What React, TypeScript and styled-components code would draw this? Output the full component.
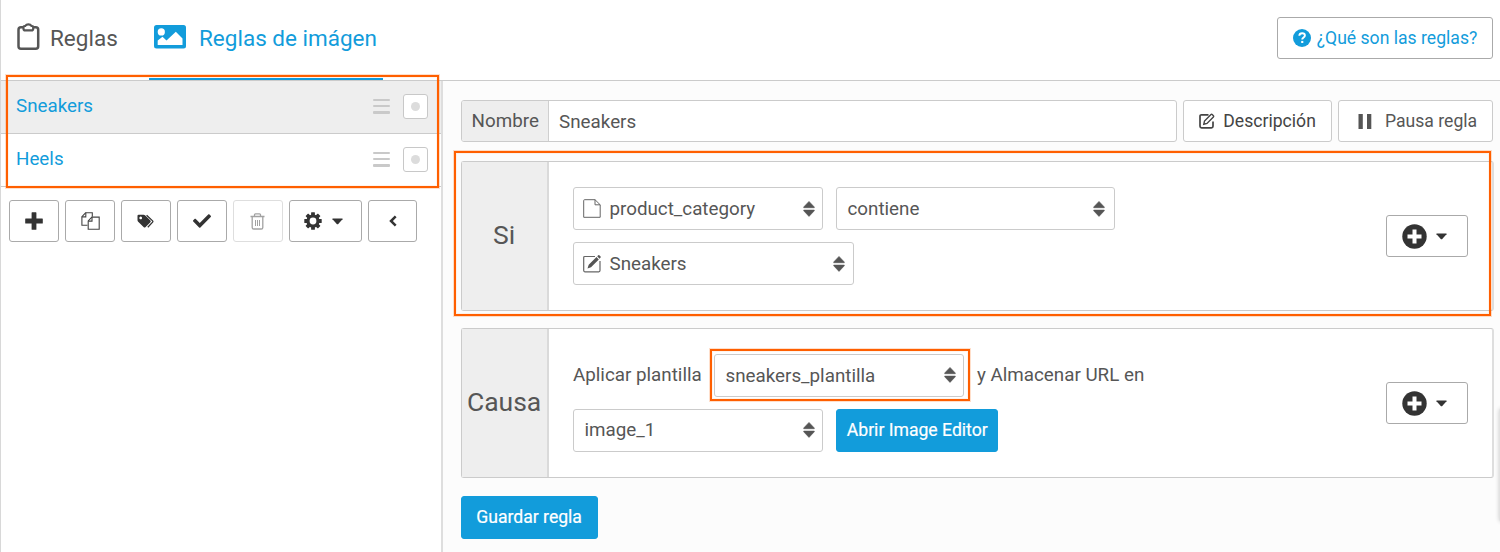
import React from "react";
import styled, { createGlobalStyle } from "styled-components";
import { FaCheck } from "react-icons/fa";

const GlobalStyle = createGlobalStyle`
  * { box-sizing: border-box; }
  html, body { margin: 0; padding: 0; background: #fff; overflow: hidden; }
  body { font-family: Roboto, "Liberation Sans", sans-serif; font-size: 18.8px; color: #565656; }
  svg { display: block; flex: none; }
`;

const blue = "#129cdb";

const Page = styled.div`
  position: relative;
  width: 1500px;
  height: 552px;
  display: flex;
  flex-direction: column;
  border-left: 1px solid #d8d8d8;
  overflow: hidden;
`;

const Header = styled.header`
  height: 81px;
  flex: none;
  display: flex;
  align-items: flex-start;
  border-bottom: 1px solid #cbcbcb;
  padding-right: 7px;
`;

const Tab = styled.div<{ $active?: boolean; $width: number; $left: number; $gap: number }>`
  width: ${(p) => p.$width}px;
  height: 80px;
  padding: 0 0 ${(p) => (p.$active ? 2 : 4)}px ${(p) => p.$left}px;
  display: flex;
  align-items: center;
  gap: ${(p) => p.$gap}px;
  font-size: 22.5px;
  line-height: 76px;
  white-space: nowrap;
  color: ${(p) => (p.$active ? blue : "#565656")};
  border-bottom: ${(p) => (p.$active ? `2px solid ${blue}` : "0")};
  svg { margin-top: -3px; }
`;

const Button = styled.button<{ $w: number; $h?: number; $tone?: string; $color?: string; $gap?: number; $fade?: boolean; $shift?: number; $pull?: number }>`
  width: ${(p) => p.$w}px;
  height: ${(p) => p.$h ?? 42}px;
  flex: none;
  display: flex;
  align-items: center;
  justify-content: center;
  gap: ${(p) => p.$gap ?? 8}px;
  padding: 0 ${(p) => p.$pull ?? 0}px 0 ${(p) => p.$shift ?? 0}px;
  border: 1px solid ${(p) => p.$tone ?? "#aaa"};
  border-radius: 3px;
  background: #fff;
  color: ${(p) => p.$color ?? "#333"};
  font: 400 17.6px/40px Roboto, "Liberation Sans", sans-serif;
  white-space: nowrap;
  > svg { opacity: ${(p) => (p.$fade ? 0.45 : 1)}; }
`;

const HelpButton = styled(Button)`
  margin: 17px 0 0 auto;
  line-height: 41px;
`;

const PrimaryButton = styled(Button)`
  background: ${blue};
  border-color: ${blue};
  color: #fff;
  font-size: 17.6px;
  -webkit-text-stroke: 0.2px #fff;
  padding-bottom: 2px;
`;

const Body = styled.div`
  flex: 1;
  display: flex;
  min-height: 0;
`;

const Sidebar = styled.aside`
  width: 442px;
  flex: none;
  border-right: 2px solid #dedede;
`;

const RuleList = styled.div`
  position: relative;
`;

const RuleRow = styled.div<{ $selected?: boolean }>`
  height: 53px;
  display: flex;
  align-items: center;
  padding: 0 13px 2px 15px;
  border-bottom: 1px solid #cbcbcb;
  background: ${(p) => (p.$selected ? "#eee" : "#fff")};
  color: ${blue};
`;

const RuleName = styled.span`
  flex: 1;
  line-height: 22px;
`;

const Grip = styled.span`
  width: 17px;
  height: 15px;
  margin-right: 13px;
  display: flex;
  flex-direction: column;
  justify-content: space-between;
  &::before, &::after, i {
    content: "";
    height: 2.5px;
    border-radius: 1px;
    background: #c9c9c9;
  }
`;

const Status = styled.span`
  width: 25px;
  height: 25px;
  border: 1px solid #c8c8c8;
  border-radius: 3px;
  background: #fff;
  display: flex;
  align-items: center;
  justify-content: center;
  &::before {
    content: "";
    width: 9px;
    height: 9px;
    border-radius: 50%;
    background: #dcdcdc;
  }
`;

const Toolbar = styled.div`
  display: flex;
  gap: 6px;
  padding: 13px 0 0 8.4px;
`;

const Highlight = styled.div<{ $inset: string }>`
  position: absolute;
  inset: ${(p) => p.$inset};
  border: 2px solid #ff5f00;
  box-shadow: 0 0 0 1px rgba(255, 110, 20, 0.22), inset 0 0 0 1px rgba(255, 110, 20, 0.08);
  pointer-events: none;
  z-index: 2;
`;

const Editor = styled.main`
  flex: 1;
  min-width: 0;
  background: #fcfcfc;
  padding: 19px 6px 0 17.6px;
`;

const NameRow = styled.div`
  display: flex;
  align-items: center;
  gap: 6px;
`;

const NameGroup = styled.div`
  width: 716px;
  height: 42px;
  display: flex;
  border: 1px solid #cbcbcb;
  border-radius: 3px;
  background: #fff;
  overflow: hidden;
`;

const NameLabel = styled.label`
  width: 87px;
  padding-left: 10px;
  line-height: 40px;
  background: #eee;
  border-right: 1px solid #cfcfcf;
`;

const NameValue = styled.div`
  padding-left: 10.5px;
  line-height: 42px;
`;

const Panel = styled.section<{ $top: number }>`
  position: relative;
  width: 1033px;
  height: 150px;
  margin-top: ${(p) => p.$top}px;
  display: flex;
  border: 1px solid #cbcbcb;
  border-right: 2px solid #dedede;
  border-radius: 3px;
  background: #fff;
`;

const PanelTitle = styled.h2`
  margin: 0;
  width: 87px;
  flex: none;
  display: flex;
  align-items: center;
  justify-content: center;
  padding-bottom: 3px;
  font-size: 26.5px;
  font-weight: 400;
  background: #eee;
  border-right: 2px solid #dadada;
`;

const PanelBody = styled.div`
  flex: 1;
  display: flex;
  align-items: center;
  padding: 0 24px 0 24.4px;
`;

const Lines = styled.div`
  flex: 1;
  display: flex;
  flex-direction: column;
  gap: 12.5px;
`;

const Line = styled.div`
  display: flex;
  gap: 12.5px;
`;

const Select = styled.div<{ $w: number; $right?: number }>`
  position: relative;
  width: ${(p) => p.$w}px;
  height: 42.5px;
  display: flex;
  align-items: center;
  padding: 0 ${(p) => p.$right ?? 7}px 0 10.5px;
  border: 1px solid #cbcbcb;
  border-radius: 3px;
  background: #fff;
  line-height: 40px;
  white-space: nowrap;
`;

const SelectText = styled.span<{ $drop?: number }>`
  flex: 1;
  padding-top: ${(p) => p.$drop ?? 0}px;
`;

const SelectIcon = styled.span`
  margin: 0 8px 0 -1px;
`;

const Inline = styled.span<{ $w?: number }>`
  width: ${(p) => (p.$w ? `${p.$w}px` : "auto")};
  line-height: 42px;
  white-space: nowrap;
`;

const SaveRow = styled.div`
  padding-top: 18px;
`;

const EdgeHandle = styled.div`
  position: absolute;
  left: 1498px;
  top: 408px;
  width: 10px;
  height: 114px;
  border-radius: 4px;
  background: #e2e2e2;
  box-shadow: 0 0 4px rgba(0, 0, 0, 0.2);
`;

const Sorter = () => (
  <svg width="12" height="16" viewBox="0 0 12 16" fill="#555">
    <path d="M6 .4 11.3 6v.7H.7V6zM6 15.4 11.3 9.8v-.7H.7v.7z" stroke="#555" strokeWidth=".6" strokeLinejoin="round" />
  </svg>
);

const Caret = () => (
  <svg width="11" height="7" viewBox="0 0 11 7" fill="currentColor">
    <path d="M.5.5h10v.8L6 6.2H5L.5 1.300z" />
  </svg>
);

const ClipboardIcon = () => (
  <svg width="23" height="28" viewBox="0 0 23 28" fill="none" stroke="#565656" strokeWidth="2.500">
    <rect x="1.500" y="4.200" width="19.700" height="21.600" rx="2.500" />
    <path d="M6.500 4.200v1.500q0 1.700 1.700 1.700h6.300q1.700 0 1.700-1.700V4.200q0-1.200-1.200-1.200h-.5Q13.500 1.300 11.400 1.300T8.200 3h-.5q-1.200 0-1.200 1.200z" fill="#fff" strokeWidth="2.200" />
  </svg>
);

const PictureIcon = () => (
  <svg width="32" height="24" viewBox="0 0 32 24">
    <rect width="32" height="23.500" rx="2.500" fill={blue} />
    <circle cx="7.300" cy="6.900" r="3.600" fill="#fff" />
    <path d="M3.700 20v-4.500l4.800-3.800 4 3.800 9.300-8.700 6.700 6.700V20z" fill="#fff" />
  </svg>
);

const HelpIcon = () => (
  <svg width="18" height="18" viewBox="0 0 18 18">
    <circle cx="9" cy="9" r="9" fill={blue} />
    <path d="M6.300 6.800C6.400 5 7.500 4.200 9.100 4.200c1.700 0 2.800.9 2.800 2.300 0 2-2.700 1.900-2.700 4" fill="none" stroke="#fff" strokeWidth="1.900" />
    <rect x="8.200" y="11.900" width="2.100" height="2.100" fill="#fff" />
  </svg>
);

const PlusIcon = () => (
  <svg width="18" height="18" viewBox="0 0 18 18" fill="#333">
    <path d="M6.600.7q0-.5.5-.5h3.800q.5 0 .5.500v5.900h5.900q.5 0 .5.500v3.800q0 .5-.5.500h-5.900v5.900q0 .5-.5.500H7.100q-.5 0-.5-.5v-5.900H.7q-.5 0-.5-.5V7.100q0-.5.500-.5h5.900z" />
  </svg>
);

const CopyIcon = () => (
  <svg width="19" height="18" viewBox="0 0 19 18" fill="none" stroke="#444" strokeWidth="1.100">
    <path d="M6.500 13.300H.9V4.700L4.600.8h6.700v4" />
    <path d="M4.800.8v4.100H.9" />
    <path d="M7.200 17.200V8.900l3.700-3.800h7.300v12.100z" fill="#fff" />
    <path d="M11 5.100v4H7.200" />
  </svg>
);

const TagsIcon = () => (
  <svg width="18" height="15" viewBox="0 0 18 15">
    <path fillRule="evenodd" fill="#333" d="M.5 1.800Q.5.700 1.600.7h5q.8 0 1.400.6l5.400 5.300q.8.8 0 1.600l-5 5q-.8.8-1.600 0L1.200 7.700Q.5 7 .5 6.200zM3.700 2.600a1.350 1.350 0 1 0 .01 0z" />
    <path d="M9.600 1.200 15.600 6.900q.6.600 0 1.200L10.800 13.300" fill="none" stroke="#333" strokeWidth="1.300" />
  </svg>
);

const TrashIcon = () => (
  <svg width="15" height="17" viewBox="0 0 15 17" fill="none" stroke="#333" strokeWidth="1.300">
    <path d="M.5 3.500h14M4.500 3.200V1.800Q4.500.8 5.500.8h4q1 0 1 1v1.400M2.200 3.800v10.600q0 1.600 1.600 1.600h7.400q1.600 0 1.600-1.600V3.800" />
    <path d="M5.500 7v6M7.500 7v6M9.500 7v6" strokeWidth="1" />
  </svg>
);

const GearIcon = () => (
  <svg width="18" height="18" viewBox="-9 -9 18 18">
    {[0, 45, 90, 135].map((a) => (
      <rect key={a} x="-1.900" y="-8.700" width="3.800" height="17.400" rx=".5" fill="#333" transform={`rotate(${a})`} />
    ))}
    <circle r="6.600" fill="#333" />
    <circle r="3.400" fill="#fff" />
  </svg>
);

const ChevronIcon = () => (
  <svg width="8" height="12" viewBox="0 0 8 12" fill="none" stroke="#333" strokeWidth="2.500">
    <path d="M6.700 1.300 2 6l4.700 4.700" />
  </svg>
);

const EditIcon = () => (
  <svg width="16" height="16" viewBox="0 0 16 16" fill="none" stroke="#444" strokeWidth="1.700">
    <path d="M9.500 1.800H2.600Q1 1.800 1 3.400v9.800q0 1.600 1.600 1.600h9.800q1.600 0 1.600-1.600V8.500" />
    <path d="M4.800 11.200l.7-3.200L12 1.500q.6-.6 1.200 0l1.200 1.200q.6.6 0 1.200L8 10.400z" strokeWidth="1.400" />
  </svg>
);

const PauseIcon = () => (
  <svg width="14" height="15" viewBox="0 0 14 15" fill="#555">
    <rect x=".5" width="4.300" height="15" />
    <rect x="9" width="4.300" height="15" />
  </svg>
);

const FileIcon = () => (
  <svg width="18" height="19" viewBox="0 0 18 19" fill="none" stroke="#666" strokeWidth="1">
    <path d="M.7 1.500Q.7.700 1.500.7H12l5.200 5.100v12.500H.7z" />
    <path d="M12 .7v5.100h5.200" />
  </svg>
);

const WriteIcon = () => (
  <svg width="18" height="18" viewBox="0 0 18 18">
    <path d="M12 1.500H1.800Q.7 1.500.7 2.600v13q0 1.200 1.100 1.200h14q1.200 0 1.200-1.200V6" fill="none" stroke="#666" strokeWidth="1.200" />
    <path d="M4.500 13.500l1.200-3.700 7.800-7.800 2.300 2.400-7.800 7.800zM14.200 1.300 15.300.2q.5-.3 1 .1l1.300 1.300q.4.500 0 1L16.500 3.700z" fill="#555" />
  </svg>
);

const AddIcon = () => (
  <svg width="25" height="25" viewBox="0 0 25 25">
    <circle cx="12.500" cy="12.500" r="12.200" fill="#333" />
    <path d="M10.500 5.500h4v5h5v4h-5v5h-4v-5h-5v-4h5z" fill="#fff" />
  </svg>
);

const rules = ["Sneakers", "Heels"];

export default function App() {
  return (
    <Page>
      <GlobalStyle />
      <Header>
        <Tab $width={147.5} $left={16} $gap={10}>
          <ClipboardIcon />
          Reglas
        </Tab>
        <Tab $active $width={234} $left={5.5} $gap={13}>
          <PictureIcon />
          Reglas de imágen
        </Tab>
        <HelpButton $w={216} $color={blue} $gap={6}>
          <HelpIcon />
          ¿Qué son las reglas?
        </HelpButton>
      </Header>
      <Body>
        <Sidebar>
          <RuleList>
            {rules.map((name, i) => (
              <RuleRow key={name} $selected={i === 0}>
                <RuleName>{name}</RuleName>
                <Grip><i /></Grip>
                <Status />
              </RuleRow>
            ))}
            <Highlight $inset="-6px 2px -1px 5px" />
          </RuleList>
          <Toolbar>
            <Button $w={50}><PlusIcon /></Button>
            <Button $w={50}><CopyIcon /></Button>
            <Button $w={50}><TagsIcon /></Button>
            <Button $w={49.5}><FaCheck size={18} /></Button>
            <Button $w={50} $tone="#dedede" $fade><TrashIcon /></Button>
            <Button $w={73} $gap={10} $pull={3}><GearIcon /><Caret /></Button>
            <Button $w={49.5}><ChevronIcon /></Button>
          </Toolbar>
        </Sidebar>
        <Editor>
          <NameRow>
            <NameGroup>
              <NameLabel>Nombre</NameLabel>
              <NameValue>Sneakers</NameValue>
            </NameGroup>
            <Button $w={149} $tone="#cbcbcb" $color="#444" $shift={1}><EditIcon />Descripción</Button>
            <Button $w={155} $tone="#cbcbcb" $color="#565656" $gap={13} $shift={5}><PauseIcon />Pausa regla</Button>
          </NameRow>
          <Panel $top={19}>
            <PanelTitle>Si</PanelTitle>
            <PanelBody>
              <Lines>
                <Line>
                  <Select $w={250.5}>
                    <SelectIcon><FileIcon /></SelectIcon>
                    <SelectText>product_category</SelectText>
                    <Sorter />
                  </Select>
                  <Select $w={279.5} $right={9}>
                    <SelectText>contiene</SelectText>
                    <Sorter />
                  </Select>
                </Line>
                <Line>
                  <Select $w={281.5} $right={8}>
                    <SelectIcon><WriteIcon /></SelectIcon>
                    <SelectText>Sneakers</SelectText>
                    <Sorter />
                  </Select>
                </Line>
              </Lines>
              <Button $w={82} $gap={9.5} $pull={4}><AddIcon /><Caret /></Button>
            </PanelBody>
            <Highlight $inset="-11px 1px -6px -8px" />
          </Panel>
          <Panel $top={17}>
            <PanelTitle>Causa</PanelTitle>
            <PanelBody>
              <Lines>
                <Line>
                  <Inline $w={128.5}>Aplicar plantilla</Inline>
                  <Select $w={250.5}>
                    <SelectText $drop={2}>sneakers_plantilla</SelectText>
                    <Sorter />
                    <Highlight $inset="-6px -7px -5px -5px" />
                  </Select>
                  <Inline>y Almacenar URL en</Inline>
                </Line>
                <Line>
                  <Select $w={250.5}>
                    <SelectText>image_1</SelectText>
                    <Sorter />
                  </Select>
                  <PrimaryButton $w={162.5} $h={43}>Abrir Image Editor</PrimaryButton>
                </Line>
              </Lines>
              <Button $w={82} $gap={9.5} $pull={4}><AddIcon /><Caret /></Button>
            </PanelBody>
          </Panel>
          <SaveRow>
            <PrimaryButton $w={137} $h={43}>Guardar regla</PrimaryButton>
          </SaveRow>
        </Editor>
      </Body>
      <EdgeHandle />
    </Page>
  );
}
